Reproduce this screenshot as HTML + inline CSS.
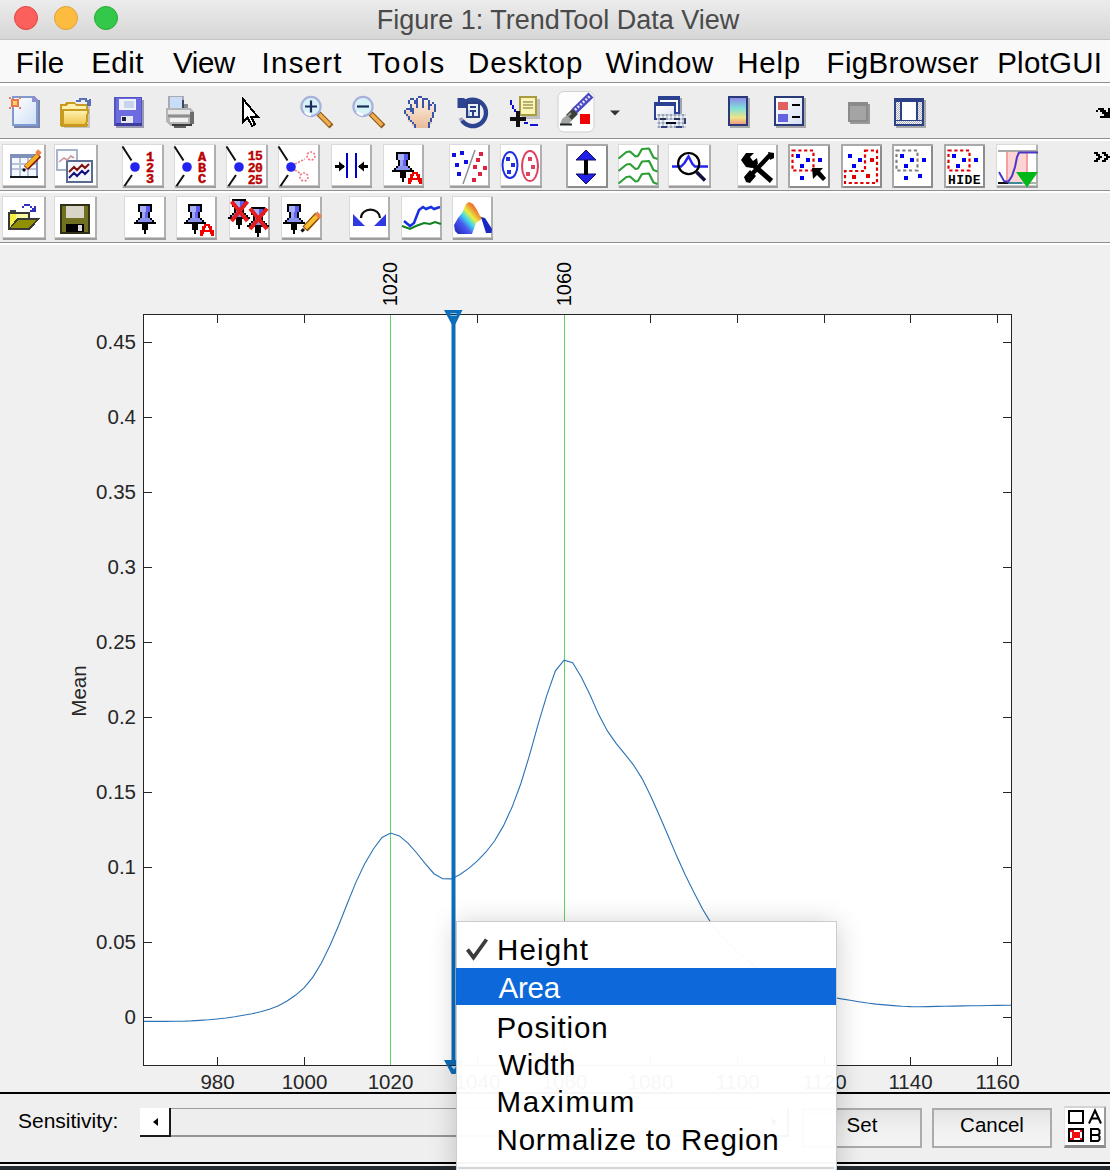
<!DOCTYPE html>
<html><head><meta charset="utf-8">
<style>
*{margin:0;padding:0;box-sizing:border-box}
html,body{width:1110px;height:1170px;overflow:hidden;background:#efefef;font-family:"Liberation Sans",sans-serif}
.a{position:absolute}
#title{left:0;top:0;width:1110px;height:40px;background:linear-gradient(#ececec,#d6d6d6);border-bottom:1px solid #c4c4c4}
.tl{position:absolute;top:6px;width:24px;height:24px;border-radius:50%}
#ttext{left:3px;top:5px;width:1110px;text-align:center;font-size:27px;color:#4a4a4a;white-space:nowrap}
#menu{left:0;top:40px;width:1110px;height:42px;background:#f9f9f9}
.mi{position:absolute;top:46px;font-size:29.5px;color:#000;white-space:nowrap}
.sep{position:absolute;left:0;width:1110px;height:3px;border-top:1px solid #8f8f8f;background:#fff}
.tb{position:absolute;left:0;width:1110px;background:#ededed}
.btn{position:absolute;background:#fff;border-right:2px solid #b8b8b8;border-bottom:3px solid #a9a9a9;border-top:1px solid #e2e2e2;border-left:1px solid #e2e2e2}
.ylab{position:absolute;font-size:19.5px;color:#262626;text-align:right;width:60px;white-space:nowrap}
.xlab{position:absolute;font-size:19.5px;color:#262626;text-align:center;width:60px;white-space:nowrap}
.pm{position:absolute;left:498px;font-size:29.5px;color:#000;white-space:nowrap;letter-spacing:0.6px}
</style></head><body>
<!-- title bar -->
<div id="title" class="a"></div>
<div class="tl" style="left:14px;background:#fc605c;border:1px solid #e0443e"></div>
<div class="tl" style="left:54px;background:#fdbc40;border:1px solid #dea236"></div>
<div class="tl" style="left:94px;background:#34c84a;border:1px solid #27aa35"></div>
<div id="ttext" class="a">Figure 1: TrendTool Data View</div>
<!-- menu -->
<div id="menu" class="a"></div>
<div class="mi" style="left:15.80px;letter-spacing:0.30px">File</div>
<div class="mi" style="left:91.20px;letter-spacing:0.50px">Edit</div>
<div class="mi" style="left:173.00px;letter-spacing:-0.40px">View</div>
<div class="mi" style="left:261.60px;letter-spacing:1.22px">Insert</div>
<div class="mi" style="left:367.20px;letter-spacing:2.02px">Tools</div>
<div class="mi" style="left:468.00px;letter-spacing:1.02px">Desktop</div>
<div class="mi" style="left:605.60px;letter-spacing:0.56px">Window</div>
<div class="mi" style="left:737.20px;letter-spacing:0.77px">Help</div>
<div class="mi" style="left:826.60px;letter-spacing:0.32px">FigBrowser</div>
<div class="mi" style="left:997.20px;letter-spacing:0.25px">PlotGUI</div>
<div class="tb" style="top:85px;height:53px"></div>
<div class="sep" style="top:82px;height:4px"></div>
<!-- TB1 -->
<svg class="a" style="left:0;top:83px" width="1110" height="56" viewBox="0 83 1110 56">
<defs>
 <linearGradient id="gPage" x1="0" y1="0" x2="1" y2="1"><stop offset="0" stop-color="#ffffff"/><stop offset="1" stop-color="#cfe0f6"/></linearGradient>
 <linearGradient id="gFold" x1="0" y1="0" x2="0" y2="1"><stop offset="0" stop-color="#fff4b8"/><stop offset="1" stop-color="#f0c850"/></linearGradient>
 <linearGradient id="gCbar" x1="0" y1="0" x2="0" y2="1"><stop offset="0" stop-color="#8c8ce8"/><stop offset="0.4" stop-color="#80e0d8"/><stop offset="0.75" stop-color="#f0e488"/><stop offset="1" stop-color="#f09c80"/></linearGradient>
 <linearGradient id="gHand" x1="0" y1="0" x2="0" y2="1"><stop offset="0" stop-color="#fdf2e6"/><stop offset="1" stop-color="#e8bc98"/></linearGradient>
 <linearGradient id="gLeg" x1="0" y1="0" x2="1" y2="1"><stop offset="0" stop-color="#ffffff"/><stop offset="1" stop-color="#d8e0f4"/></linearGradient>
</defs>
<g shape-rendering="crispEdges">
 <!-- new -->
 <rect x="14" y="100" width="26" height="28" fill="#7a84a8"/>
 <path d="M12 96h22l4 4v26h-26z" fill="#7f9ad0"/>
 <path d="M14 98h19l3 3v23h-22z" fill="url(#gPage)"/>
 <path d="M33 96h1l4 4v2h-6v-6z" fill="#8f90d0"/>
 <rect x="11" y="99" width="8" height="8" fill="#e87848"/>
 <rect x="13" y="101" width="4" height="4" fill="#f8d070"/>
 <rect x="9" y="97" width="2" height="2" fill="#e88060"/><rect x="19" y="97" width="2" height="2" fill="#e88060"/><rect x="9" y="107" width="2" height="2" fill="#e88060"/><rect x="19" y="107" width="2" height="2" fill="#e88060"/>
 <!-- open -->
 <rect x="64" y="104" width="26" height="24" fill="#a8a8a8" opacity="0.6"/>
 <path d="M60 104h4l2-2h8l2 2h12v22h-28z" fill="#c89a20"/>
 <path d="M62 106h4l2-2h6l2 2h10v4h-24z" fill="#fff0b0"/>
 <path d="M64 110h24v14h-24z" fill="url(#gFold)"/>
 <path d="M62 110h26l-2 16h-24z" fill="none" stroke="#c89a20" stroke-width="2"/>
 <path d="M76 101h4v-2h6v2h2v4h2v-6" fill="none" stroke="#5a70b0" stroke-width="2"/>
 <!-- save -->
 <rect x="116" y="100" width="28" height="28" fill="#9a9ab0"/>
 <rect x="114" y="97" width="28" height="29" fill="#5454c0"/>
 <rect x="116" y="98" width="25" height="27" fill="#6c6ce0"/>
 <rect x="119" y="99" width="17" height="11" fill="#eef2fa"/>
 <rect x="124" y="101" width="10" height="7" fill="#c8d4ec"/>
 <rect x="121" y="116" width="12" height="8" fill="#e8e8f0"/>
 <rect x="122" y="117" width="4" height="4" fill="#202040"/>
 <rect x="116" y="123" width="26" height="3" fill="#3c3ca0"/>
 <!-- print -->
 <rect x="168" y="96" width="16" height="13" fill="#a8aab4"/>
 <rect x="170" y="97" width="12" height="12" fill="#c8ddf8"/>
 <rect x="182" y="100" width="2" height="8" fill="#3e4668"/>
 <rect x="184" y="104" width="4" height="4" fill="#8a8a8a"/>
 <path d="M166 108H190L194 112V122L190 126H170L166 122Z" fill="#b4b4b4"/>
 <rect x="168" y="110" width="22" height="4" fill="#e6e6e6"/>
 <rect x="168" y="115" width="22" height="2" fill="#8e8e8e"/>
 <rect x="170" y="118" width="18" height="4" fill="#f2f2f2"/>
 <rect x="190" y="112" width="4" height="12" fill="#6c6c6c"/>
 <rect x="172" y="124" width="20" height="2" fill="#3a3a3a"/>
 <rect x="174" y="126" width="12" height="2" fill="#606060"/>
 <!-- pointer -->
 <path d="M243 99V122L247.5 117.5L252 126L255 124.5L251 116.5H257.5Z" fill="#fff" stroke="#000" stroke-width="2" stroke-linejoin="miter"/>
</g>
<!-- zoom in / out -->
<g>
 <path d="M320.5 115.5l9 9" stroke="#8a5a18" stroke-width="5.6" stroke-linecap="square"/>
 <path d="M320.5 115.5l8.5 8.5" stroke="#f4ac50" stroke-width="3.4" stroke-linecap="square"/>
 <circle cx="311" cy="106.5" r="9.6" fill="#d6f2f6" stroke="#a8b0dc" stroke-width="2.2"/>
 <path d="M305 112a9 9 0 0 0 6 3" fill="none" stroke="#fff" stroke-width="2.5"/>
 <path d="M305 106.5h12M311 100.5v12" stroke="#1a2a5a" stroke-width="2.2"/>
 <path d="M372.5 115.5l9 9" stroke="#8a5a18" stroke-width="5.6" stroke-linecap="square"/>
 <path d="M372.5 115.5l8.5 8.5" stroke="#f4ac50" stroke-width="3.4" stroke-linecap="square"/>
 <circle cx="363" cy="106.5" r="9.6" fill="#d6f2f6" stroke="#a8b0dc" stroke-width="2.2"/>
 <path d="M357 112a9 9 0 0 0 6 3" fill="none" stroke="#fff" stroke-width="2.5"/>
 <path d="M357 106.5h12" stroke="#1a2a5a" stroke-width="2.2"/>
</g>
<!-- hand -->
<path d="M406 108H412V100H418V98H422V100H428V102H430V106H434V112H434V118H432V124H430V128H416V126H412V122H408V118H406Z" fill="url(#gHand)" shape-rendering="crispEdges"/>
<g fill="#3a55a8" shape-rendering="crispEdges"><rect x="418" y="96" width="4" height="2"/><rect x="410" y="98" width="4" height="2"/><rect x="416" y="98" width="2" height="2"/><rect x="422" y="98" width="6" height="2"/><rect x="408" y="100" width="2" height="2"/><rect x="414" y="100" width="4" height="2"/><rect x="422" y="100" width="2" height="2"/><rect x="428" y="100" width="2" height="2"/><rect x="408" y="102" width="2" height="2"/><rect x="414" y="102" width="4" height="2"/><rect x="422" y="102" width="2" height="2"/><rect x="428" y="102" width="2" height="2"/><rect x="432" y="102" width="2" height="2"/><rect x="410" y="104" width="2" height="2"/><rect x="416" y="104" width="2" height="2"/><rect x="422" y="104" width="2" height="2"/><rect x="428" y="104" width="4" height="2"/><rect x="434" y="104" width="2" height="2"/><rect x="410" y="106" width="2" height="2"/><rect x="416" y="106" width="2" height="2"/><rect x="422" y="106" width="2" height="2"/><rect x="428" y="106" width="2" height="2"/><rect x="434" y="106" width="2" height="2"/><rect x="406" y="108" width="8" height="2"/><rect x="428" y="108" width="2" height="2"/><rect x="434" y="108" width="2" height="2"/><rect x="404" y="110" width="2" height="2"/><rect x="410" y="110" width="4" height="2"/><rect x="434" y="110" width="2" height="2"/><rect x="404" y="112" width="2" height="2"/><rect x="412" y="112" width="2" height="2"/><rect x="432" y="112" width="2" height="2"/><rect x="406" y="114" width="2" height="2"/><rect x="432" y="114" width="2" height="2"/><rect x="408" y="116" width="2" height="2"/><rect x="432" y="116" width="2" height="2"/><rect x="408" y="118" width="2" height="2"/><rect x="430" y="118" width="2" height="2"/><rect x="410" y="120" width="2" height="2"/><rect x="430" y="120" width="2" height="2"/><rect x="412" y="122" width="2" height="2"/><rect x="428" y="122" width="2" height="2"/><rect x="414" y="124" width="2" height="2"/><rect x="428" y="124" width="2" height="2"/><rect x="414" y="126" width="2" height="2"/><rect x="428" y="126" width="2" height="2"/></g>
<!-- rotate -->
<path d="M463.5 103.5A13.2 13.2 0 1 1 462 120.5" fill="none" stroke="#2c4490" stroke-width="4.4"/>
<path d="M462 120.5A13.2 13.2 0 0 1 460.5 118" fill="none" stroke="#9aa0b8" stroke-width="4"/>
<path d="M457.5 98H464L468 101.5L466 108H457.5Z" fill="#2c4490"/>
<g shape-rendering="crispEdges">
 <rect x="466" y="102" width="14" height="16" fill="#2c3f80"/>
 <rect x="468" y="104" width="10" height="12" fill="#e8eef8"/>
 <rect x="470" y="106" width="6" height="2" fill="#2c3f80"/>
 <rect x="470" y="110" width="6" height="2" fill="#2c3f80"/>
 <rect x="472" y="110" width="2" height="8" fill="#2c3f80"/>
 <rect x="470" y="116" width="6" height="2" fill="#2c3f80"/>
 <rect x="468" y="110" width="2" height="6" fill="#b8c8ec"/>
</g>
<!-- data cursor -->
<g shape-rendering="crispEdges">
 <rect x="522" y="99" width="18" height="20" fill="#a0a0a0" opacity="0.6"/>
 <rect x="519" y="96" width="18" height="20" fill="#aa9c40"/>
 <rect x="521" y="98" width="14" height="16" fill="#fbf6b8"/>
 <rect x="523" y="101" width="10" height="1.5" fill="#b8b070"/><rect x="523" y="104" width="10" height="1.5" fill="#b8b070"/><rect x="523" y="107" width="10" height="1.5" fill="#b8b070"/>
 <rect x="510" y="100" width="2" height="5" fill="#1010d0"/><rect x="512" y="105" width="2" height="4" fill="#1010d0"/><rect x="514" y="109" width="2" height="3" fill="#1010d0"/>
 <rect x="524" y="122" width="4" height="2" fill="#1010d0"/><rect x="530" y="124" width="8" height="2" fill="#1010d0"/>
 <rect x="516" y="111" width="4" height="16" fill="#101010"/><rect x="510" y="117" width="16" height="4" fill="#101010"/>
</g>
<!-- brush button -->
<rect x="558" y="91.5" width="36" height="40.5" rx="6" fill="#fdfdfd" stroke="#d0d0d0" stroke-width="1"/>
<path d="M574 111.5L591 95" stroke="#4848c0" stroke-width="7"/>
<path d="M575 110L590.5 95.5" stroke="#e6e6ff" stroke-width="2.6" stroke-dasharray="2 1.6"/>
<path d="M566 115L572 109L578 114L571 121Z" fill="#3a403a"/>
<path d="M568 116L571 113" stroke="#9a9a9a" stroke-width="2"/>
<path d="M560 125L562 119L567 115L572 120L569 124Z" fill="#a4a4a4"/>
<path d="M560 124.5H572" stroke="#202820" stroke-width="2"/>
<rect x="580" y="114" width="10" height="10" fill="#f00000" shape-rendering="crispEdges"/>
<path d="M610 110.5h10l-5 5z" fill="#333"/>
<!-- link -->
<defs><pattern id="chain" width="4" height="4" patternUnits="userSpaceOnUse"><rect width="4" height="4" fill="#c8d0dc"/><rect width="2" height="2" fill="#eef2f8"/><rect x="2" y="2" width="2" height="2" fill="#98a4b8"/></pattern>
<linearGradient id="gWin" x1="0" y1="0" x2="1" y2="1"><stop offset="0" stop-color="#ffffff"/><stop offset="1" stop-color="#dde2f0"/></linearGradient></defs>
<g shape-rendering="crispEdges">
 <rect x="680" y="98" width="2" height="16" fill="#a0a4ac"/>
 <rect x="658" y="96" width="22" height="18" fill="#2a4090"/>
 <rect x="660" y="100" width="18" height="12" fill="#fff"/>
 <rect x="654" y="102" width="22" height="18" fill="#2a4090"/>
 <rect x="656" y="106" width="18" height="12" fill="url(#gWin)"/>
 <rect x="657" y="114" width="29" height="14" fill="url(#chain)"/>
 <rect x="660" y="118" width="6" height="2" fill="#2a3050"/><rect x="674" y="118" width="6" height="2" fill="#2a3050"/>
 <rect x="665" y="120" width="12" height="2" fill="#f4f8ff"/>
 <rect x="666" y="122" width="10" height="2" fill="#000818"/>
 <rect x="661" y="126" width="6" height="2" fill="#34407a"/><rect x="676" y="126" width="6" height="2" fill="#34407a"/>
 <rect x="684" y="118" width="2" height="6" fill="#34407a"/>
</g>
<!-- colorbar -->
<g shape-rendering="crispEdges">
 <rect x="730" y="98" width="20" height="30" fill="#a8a8a8"/>
 <rect x="728" y="96" width="20" height="30" fill="#2a3a78"/>
 <rect x="730" y="98" width="16" height="26" fill="url(#gCbar)"/>
 <!-- legend -->
 <rect x="776" y="98" width="30" height="30" fill="#a8a8a8"/>
 <rect x="774" y="96" width="30" height="30" fill="#2a3a78"/>
 <rect x="776" y="98" width="26" height="26" fill="url(#gLeg)"/>
 <rect x="778" y="102" width="10" height="8" fill="#e06060"/>
 <rect x="778" y="114" width="10" height="8" fill="#6464e0"/>
 <rect x="792" y="104" width="8" height="2" fill="#000"/>
 <rect x="792" y="116" width="8" height="2" fill="#000"/>
 <!-- gray square -->
 <rect x="850" y="104" width="20" height="20" fill="#9a9a9a"/>
 <rect x="848" y="102" width="20" height="20" fill="#8a8a8a"/>
 <rect x="850" y="106" width="16" height="14" fill="#a4a4a4"/>
 <!-- window -->
 <defs><pattern id="chk" width="2" height="2" patternUnits="userSpaceOnUse"><rect width="2" height="2" fill="#f4f4f4"/><rect width="1" height="1" fill="#b0b0b8"/><rect x="1" y="1" width="1" height="1" fill="#b0b0b8"/></pattern></defs>
 <rect x="896" y="100" width="30" height="28" fill="#a8a8a8"/>
 <rect x="894" y="98" width="30" height="28" fill="#2c4088"/>
 <rect x="896" y="102" width="26" height="22" fill="url(#chk)"/>
 <rect x="900" y="102" width="2" height="18" fill="#2c4088"/>
 <rect x="916" y="102" width="2" height="18" fill="#2c4088"/>
 <rect x="902" y="102" width="14" height="18" fill="#ffffff"/>
 <rect x="896" y="120" width="26" height="1" fill="#2c4088"/>
</g>
<!-- overflow arrow -->
<g shape-rendering="crispEdges" fill="#000"><rect x="1098" y="108" width="6" height="2"/><rect x="1108" y="108" width="2" height="2"/><rect x="1096" y="110" width="2" height="2"/><rect x="1100" y="110" width="6" height="2"/><rect x="1108" y="110" width="2" height="2"/><rect x="1102" y="112" width="8" height="2"/><rect x="1104" y="114" width="6" height="2"/><rect x="1100" y="116" width="10" height="2"/></g>
</svg>

<!-- /TB1 -->
<div class="sep" style="top:138px"></div>
<div class="tb" style="top:141px;height:49px"></div>
<div class="sep" style="top:190px"></div>
<div class="tb" style="top:193px;height:49px"></div>
<div class="sep" style="top:242px"></div>
<!-- TB23 -->
<svg class="a" style="left:0;top:140px" width="1110" height="104" viewBox="0 140 1110 104">
<defs><linearGradient id="gRain" x1="0" y1="1" x2="0.6" y2="0"><stop offset="0" stop-color="#3040c0"/><stop offset="0.35" stop-color="#40c0f0"/><stop offset="0.55" stop-color="#60e060"/><stop offset="0.75" stop-color="#f0e040"/><stop offset="1" stop-color="#e03020"/></linearGradient></defs>
<g shape-rendering="crispEdges">
<rect x="2" y="144" width="44" height="44" fill="#dadada"/><rect x="44" y="145" width="2" height="43" fill="#b0b0b0"/><rect x="3" y="186" width="43" height="2" fill="#9e9e9e"/><rect x="3" y="145" width="41" height="41" fill="#fff"/><rect x="3" y="185" width="41" height="1" fill="#c8c8c8"/>
<rect x="54" y="144" width="44" height="44" fill="#dadada"/><rect x="96" y="145" width="2" height="43" fill="#b0b0b0"/><rect x="55" y="186" width="43" height="2" fill="#9e9e9e"/><rect x="55" y="145" width="41" height="41" fill="#fff"/><rect x="55" y="185" width="41" height="1" fill="#c8c8c8"/>
<rect x="122" y="144" width="42" height="44" fill="#dadada"/><rect x="162" y="145" width="2" height="43" fill="#b0b0b0"/><rect x="123" y="186" width="41" height="2" fill="#9e9e9e"/><rect x="123" y="145" width="39" height="41" fill="#fff"/><rect x="123" y="185" width="39" height="1" fill="#c8c8c8"/>
<rect x="174" y="144" width="42" height="44" fill="#dadada"/><rect x="214" y="145" width="2" height="43" fill="#b0b0b0"/><rect x="175" y="186" width="41" height="2" fill="#9e9e9e"/><rect x="175" y="145" width="39" height="41" fill="#fff"/><rect x="175" y="185" width="39" height="1" fill="#c8c8c8"/>
<rect x="226" y="144" width="42" height="44" fill="#dadada"/><rect x="266" y="145" width="2" height="43" fill="#b0b0b0"/><rect x="227" y="186" width="41" height="2" fill="#9e9e9e"/><rect x="227" y="145" width="39" height="41" fill="#fff"/><rect x="227" y="185" width="39" height="1" fill="#c8c8c8"/>
<rect x="278" y="144" width="42" height="44" fill="#dadada"/><rect x="318" y="145" width="2" height="43" fill="#b0b0b0"/><rect x="279" y="186" width="41" height="2" fill="#9e9e9e"/><rect x="279" y="145" width="39" height="41" fill="#fff"/><rect x="279" y="185" width="39" height="1" fill="#c8c8c8"/>
<rect x="331" y="144" width="41" height="44" fill="#dadada"/><rect x="370" y="145" width="2" height="43" fill="#b0b0b0"/><rect x="332" y="186" width="40" height="2" fill="#9e9e9e"/><rect x="332" y="145" width="38" height="41" fill="#fff"/><rect x="332" y="185" width="38" height="1" fill="#c8c8c8"/>
<rect x="383" y="144" width="41" height="44" fill="#dadada"/><rect x="422" y="145" width="2" height="43" fill="#b0b0b0"/><rect x="384" y="186" width="40" height="2" fill="#9e9e9e"/><rect x="384" y="145" width="38" height="41" fill="#fff"/><rect x="384" y="185" width="38" height="1" fill="#c8c8c8"/>
<rect x="449" y="144" width="41" height="44" fill="#dadada"/><rect x="488" y="145" width="2" height="43" fill="#b0b0b0"/><rect x="450" y="186" width="40" height="2" fill="#9e9e9e"/><rect x="450" y="145" width="38" height="41" fill="#fff"/><rect x="450" y="185" width="38" height="1" fill="#c8c8c8"/>
<rect x="500" y="144" width="42" height="44" fill="#dadada"/><rect x="540" y="145" width="2" height="43" fill="#b0b0b0"/><rect x="501" y="186" width="41" height="2" fill="#9e9e9e"/><rect x="501" y="145" width="39" height="41" fill="#fff"/><rect x="501" y="185" width="39" height="1" fill="#c8c8c8"/>
<rect x="566" y="144" width="42" height="44" fill="#a9a9a9"/><rect x="568" y="146" width="40" height="42" fill="#8c8c8c"/><rect x="568" y="146" width="38" height="40" fill="#fff"/>
<rect x="618" y="144" width="41" height="44" fill="#dadada"/><rect x="657" y="145" width="2" height="43" fill="#b0b0b0"/><rect x="619" y="186" width="40" height="2" fill="#9e9e9e"/><rect x="619" y="145" width="38" height="41" fill="#fff"/><rect x="619" y="185" width="38" height="1" fill="#c8c8c8"/>
<rect x="668" y="144" width="43" height="44" fill="#dadada"/><rect x="709" y="145" width="2" height="43" fill="#b0b0b0"/><rect x="669" y="186" width="42" height="2" fill="#9e9e9e"/><rect x="669" y="145" width="40" height="41" fill="#fff"/><rect x="669" y="185" width="40" height="1" fill="#c8c8c8"/>
<rect x="737" y="144" width="41" height="44" fill="#dadada"/><rect x="776" y="145" width="2" height="43" fill="#b0b0b0"/><rect x="738" y="186" width="40" height="2" fill="#9e9e9e"/><rect x="738" y="145" width="38" height="41" fill="#fff"/><rect x="738" y="185" width="38" height="1" fill="#c8c8c8"/>
<rect x="788" y="144" width="42" height="44" fill="#a9a9a9"/><rect x="790" y="146" width="40" height="42" fill="#8c8c8c"/><rect x="790" y="146" width="38" height="40" fill="#fff"/>
<rect x="841" y="144" width="41" height="44" fill="#a9a9a9"/><rect x="843" y="146" width="39" height="42" fill="#8c8c8c"/><rect x="843" y="146" width="37" height="40" fill="#fff"/>
<rect x="892" y="144" width="41" height="44" fill="#a9a9a9"/><rect x="894" y="146" width="39" height="42" fill="#8c8c8c"/><rect x="894" y="146" width="37" height="40" fill="#fff"/>
<rect x="944" y="144" width="41" height="44" fill="#a9a9a9"/><rect x="946" y="146" width="39" height="42" fill="#8c8c8c"/><rect x="946" y="146" width="37" height="40" fill="#fff"/>
<rect x="996" y="144" width="42" height="44" fill="#dadada"/><rect x="1036" y="145" width="2" height="43" fill="#b0b0b0"/><rect x="997" y="186" width="41" height="2" fill="#9e9e9e"/><rect x="997" y="145" width="39" height="41" fill="#fff"/><rect x="997" y="185" width="39" height="1" fill="#c8c8c8"/>
<rect x="2" y="196" width="44" height="44" fill="#dadada"/><rect x="44" y="197" width="2" height="43" fill="#b0b0b0"/><rect x="3" y="238" width="43" height="2" fill="#9e9e9e"/><rect x="3" y="197" width="41" height="41" fill="#fff"/><rect x="3" y="237" width="41" height="1" fill="#c8c8c8"/>
<rect x="54" y="196" width="43" height="44" fill="#dadada"/><rect x="95" y="197" width="2" height="43" fill="#b0b0b0"/><rect x="55" y="238" width="42" height="2" fill="#9e9e9e"/><rect x="55" y="197" width="40" height="41" fill="#fff"/><rect x="55" y="237" width="40" height="1" fill="#c8c8c8"/>
<rect x="124" y="196" width="42" height="44" fill="#dadada"/><rect x="164" y="197" width="2" height="43" fill="#b0b0b0"/><rect x="125" y="238" width="41" height="2" fill="#9e9e9e"/><rect x="125" y="197" width="39" height="41" fill="#fff"/><rect x="125" y="237" width="39" height="1" fill="#c8c8c8"/>
<rect x="176" y="196" width="41" height="44" fill="#dadada"/><rect x="215" y="197" width="2" height="43" fill="#b0b0b0"/><rect x="177" y="238" width="40" height="2" fill="#9e9e9e"/><rect x="177" y="197" width="38" height="41" fill="#fff"/><rect x="177" y="237" width="38" height="1" fill="#c8c8c8"/>
<rect x="229" y="196" width="41" height="44" fill="#dadada"/><rect x="268" y="197" width="2" height="43" fill="#b0b0b0"/><rect x="230" y="238" width="40" height="2" fill="#9e9e9e"/><rect x="230" y="197" width="38" height="41" fill="#fff"/><rect x="230" y="237" width="38" height="1" fill="#c8c8c8"/>
<rect x="281" y="196" width="41" height="44" fill="#dadada"/><rect x="320" y="197" width="2" height="43" fill="#b0b0b0"/><rect x="282" y="238" width="40" height="2" fill="#9e9e9e"/><rect x="282" y="197" width="38" height="41" fill="#fff"/><rect x="282" y="237" width="38" height="1" fill="#c8c8c8"/>
<rect x="349" y="196" width="41" height="44" fill="#dadada"/><rect x="388" y="197" width="2" height="43" fill="#b0b0b0"/><rect x="350" y="238" width="40" height="2" fill="#9e9e9e"/><rect x="350" y="197" width="38" height="41" fill="#fff"/><rect x="350" y="237" width="38" height="1" fill="#c8c8c8"/>
<rect x="401" y="196" width="41" height="44" fill="#dadada"/><rect x="440" y="197" width="2" height="43" fill="#b0b0b0"/><rect x="402" y="238" width="40" height="2" fill="#9e9e9e"/><rect x="402" y="197" width="38" height="41" fill="#fff"/><rect x="402" y="237" width="38" height="1" fill="#c8c8c8"/>
<rect x="452" y="196" width="41" height="44" fill="#dadada"/><rect x="491" y="197" width="2" height="43" fill="#b0b0b0"/><rect x="453" y="238" width="40" height="2" fill="#9e9e9e"/><rect x="453" y="197" width="38" height="41" fill="#fff"/><rect x="453" y="237" width="38" height="1" fill="#c8c8c8"/>
</g>
<defs>
 <g id="pin">
  <rect x="4" y="0" width="14" height="2" fill="#000"/>
  <rect x="6" y="2" width="10" height="6" fill="#a8b0f8"/>
  <rect x="12" y="2" width="4" height="6" fill="#5a5af0"/>
  <rect x="4" y="2" width="2" height="6" fill="#000"/><rect x="16" y="2" width="2" height="6" fill="#000"/>
  <rect x="6" y="8" width="2" height="6" fill="#000"/><rect x="14" y="8" width="2" height="6" fill="#000"/>
  <rect x="8" y="8" width="6" height="6" fill="#9ca4f4"/>
  <rect x="11" y="8" width="3" height="6" fill="#6464ec"/>
  <rect x="4" y="14" width="2" height="2" fill="#000"/><rect x="16" y="14" width="2" height="2" fill="#000"/>
  <rect x="6" y="14" width="10" height="4" fill="#8890f0"/>
  <rect x="2" y="16" width="2" height="2" fill="#000"/><rect x="18" y="16" width="2" height="2" fill="#000"/>
  <rect x="4" y="16" width="14" height="2" fill="#8890f0"/>
  <rect x="0" y="18" width="22" height="2" fill="#000"/>
  <rect x="8" y="20" width="6" height="6" fill="#000"/>
  <rect x="10" y="26" width="2" height="4" fill="#000"/>
 </g>
 <g id="glA" fill="#f00000">
  <rect x="4" y="0" width="6" height="2"/>
  <rect x="2" y="2" width="4" height="2"/><rect x="8" y="2" width="4" height="2"/>
  <rect x="2" y="4" width="3" height="2"/><rect x="9" y="4" width="3" height="2"/>
  <rect x="0" y="6" width="14" height="2"/>
  <rect x="0" y="8" width="4" height="2"/><rect x="10" y="8" width="4" height="2"/>
  <rect x="0" y="10" width="3" height="2"/><rect x="11" y="10" width="3" height="2"/>
 </g>
</defs>
<g shape-rendering="crispEdges">
 <!-- r2b1 table edit -->
 <rect x="10" y="154" width="28" height="24" fill="#8090b8"/>
 <rect x="12" y="158" width="24" height="18" fill="#f4f8ff"/>
 <rect x="12" y="163" width="24" height="1.5" fill="#b8c4d8"/><rect x="12" y="168" width="24" height="1.5" fill="#b8c4d8"/>
 <rect x="19" y="158" width="1.5" height="18" fill="#b8c4d8"/><rect x="27" y="158" width="1.5" height="18" fill="#b8c4d8"/>
 <rect x="10" y="176" width="28" height="2" fill="#101820"/>
</g>
<path d="M26 168l13-13" stroke="#801000" stroke-width="6"/>
<path d="M26 167l12-12" stroke="#f8b020" stroke-width="4"/>
<path d="M37 154l3-3" stroke="#f08040" stroke-width="5"/>
<path d="M25 169l-2 2" stroke="#101010" stroke-width="3"/>
<g shape-rendering="crispEdges">
 <!-- r2b2 plot graphs -->
 <rect x="56" y="149" width="22" height="22" fill="#a8b4cc"/>
 <rect x="58" y="151" width="18" height="18" fill="#fafcff"/>
 <rect x="66" y="160" width="27" height="23" fill="#5a6a90"/>
 <rect x="68" y="162" width="23" height="19" fill="#f4f6fa"/>
</g>
<path d="M59 162l5-4 3 2 4-4 3 2" fill="none" stroke="#c89898" stroke-width="1.6"/>
<path d="M69 172l5-5 3 3 5-5 3 3 4-4" fill="none" stroke="#801010" stroke-width="2"/>
<path d="M69 178l5-5 3 3 5-5 3 3 4-4" fill="none" stroke="#101080" stroke-width="2"/>
<!-- r2b3..6 label buttons -->
<g stroke="#101010" stroke-width="2" fill="none"><path d="M122.5 146.5L131.5 160.5M124.5 186L132.0 175" /><path d="M174.5 146.5L183.5 160.5M176.5 186L184.0 175" /><path d="M226.5 146.5L235.5 160.5M228.5 186L236.0 175" /><path d="M278.5 146.5L287.5 160.5M280.5 186L288.0 175" /></g>
<g fill="#2424f0"><circle cx="135" cy="167" r="4.8"/><circle cx="187" cy="167" r="4.8"/><circle cx="239" cy="167" r="4.8"/><circle cx="291" cy="167" r="4.8"/></g>
<g font-family="Liberation Mono" font-weight="bold" fill="#b80000" stroke="#b80000" stroke-width="0.5" font-size="13.5" text-anchor="middle">
 <text x="150" y="161">1</text><text x="150" y="172">2</text><text x="150" y="183">3</text>
 <text x="202" y="161">A</text><text x="202" y="172">B</text><text x="202" y="183">C</text>
</g>
<g font-family="Liberation Mono" font-weight="bold" fill="#b80000" stroke="#b80000" stroke-width="0.4" font-size="13" text-anchor="middle" letter-spacing="-0.5">
 <text x="255" y="160">15</text><text x="255" y="172">20</text><text x="255" y="184">25</text>
</g>
<g fill="none" stroke="#f07080" stroke-width="1.6" stroke-dasharray="2 1.5">
 <circle cx="311" cy="156" r="4"/><circle cx="304" cy="177" r="4"/>
 <path d="M295 164l10-5M295 170l6 4"/>
</g>
<!-- r2b7 |<>| -->
<g shape-rendering="crispEdges">
 <rect x="346" y="153" width="2" height="25" fill="#0000d0"/><rect x="355" y="153" width="2" height="25" fill="#0000d0"/>
 <rect x="335" y="165" width="9" height="3" fill="#000"/><rect x="359" y="165" width="9" height="3" fill="#000"/>
</g>
<path d="M345 166.5l-6-5v10z M358 166.5l6-5v10z" fill="#000"/>
<!-- r2b9 scatter -->
<g shape-rendering="crispEdges" fill="#1010e0">
 <rect x="452" y="153" width="4" height="4"/><rect x="460" y="151" width="4" height="4"/><rect x="455" y="163" width="4" height="4"/><rect x="464" y="160" width="4" height="4"/><rect x="457" y="172" width="4" height="4"/>
</g>
<g shape-rendering="crispEdges" fill="#e02040">
 <rect x="479" y="152" width="4" height="4"/><rect x="476" y="158" width="4" height="4"/><rect x="473" y="165" width="4" height="4"/><rect x="483" y="166" width="4" height="4"/><rect x="478" y="172" width="4" height="4"/><rect x="472" y="178" width="4" height="4"/>
</g>
<path d="M475 150l-12 34" stroke="#909090" stroke-width="1.5"/>
<!-- r2b10 ellipses -->
<ellipse cx="510" cy="165" rx="7.5" ry="13" fill="none" stroke="#2030e0" stroke-width="2"/>
<ellipse cx="530" cy="166" rx="8" ry="15" fill="none" stroke="#e04060" stroke-width="2"/>
<g shape-rendering="crispEdges">
 <rect x="506" y="157" width="3.5" height="3.5" fill="#2030e0"/><rect x="511" y="163" width="3.5" height="3.5" fill="#2030e0"/><rect x="507" y="170" width="3.5" height="3.5" fill="#2030e0"/>
 <rect x="528" y="157" width="3.5" height="3.5" fill="#e04060"/><rect x="531" y="165" width="3.5" height="3.5" fill="#e04060"/><rect x="526" y="172" width="3.5" height="3.5" fill="#e04060"/>
</g>
<!-- r2b11 up-down -->
<path d="M586 150l10 10h-20z M586 184l10-10h-20z" fill="#2020e8" stroke="#101060" stroke-width="1"/>
<rect x="584" y="159.5" width="4" height="15" fill="#000" shape-rendering="crispEdges"/>
<!-- r2b12 waves -->
<g fill="none" stroke="#2e9e38" stroke-width="2.2" stroke-linejoin="round">
 <path id="wv" d="M618.5 158.5L626.5 152L630 151.5L635.5 156.5L638 156L642 149L649 148.5L653.5 157.5L657.5 159"/>
 <use href="#wv" y="12.5"/>
 <use href="#wv" y="25"/>
</g>
<!-- r2b13 peak magnifier -->
<path d="M672 166.5H681L684.5 163L688.5 156.5L692.5 164L695 166.5H708" fill="none" stroke="#2424f0" stroke-width="2.4"/>
<circle cx="688.7" cy="163.6" r="10.6" fill="none" stroke="#000" stroke-width="2.2"/>
<path d="M696.5 172L705 180.5" stroke="#101040" stroke-width="3.6"/>
<!-- r2b14 tools -->
<path d="M751 163L771.5 181" stroke="#000" stroke-width="5"/>
<path d="M741 160L746 153H754L750 157L753 161L757 158L758 164L752 168L746 167Z" fill="#000"/>
<path d="M770 155L752 174" stroke="#000" stroke-width="4.4"/>
<path d="M768 152L774 153L774 158L770 160Z" fill="#000"/>
<path d="M744 177L750 170L756 176L750 183L746 182Z" fill="#000"/>
<!-- r2b15-18 dotted -->
<g fill="none" stroke-width="2.2" stroke-dasharray="3.2 2.6">
 <rect x="792.5" y="150.5" width="21" height="20" stroke="#e00000"/>
 <path d="M865 150.5H877V183H845V171H865Z" stroke="#e00000"/>
 <rect x="896.5" y="150.5" width="21" height="20" stroke="#808080"/>
 <rect x="948.5" y="150.5" width="21" height="20" stroke="#e00000"/>
</g>
<g shape-rendering="crispEdges" fill="#0000f0">
 <rect x="796" y="154" width="4" height="4"/><rect x="806" y="158" width="4" height="4"/><rect x="818" y="158" width="4" height="4"/><rect x="800" y="164" width="4" height="4"/><rect x="800" y="176" width="4" height="4"/>
 <rect x="848" y="154" width="4" height="4"/><rect x="858" y="158" width="4" height="4"/><rect x="852" y="164" width="4" height="4"/>
 <rect x="900" y="154" width="4" height="4"/><rect x="910" y="158" width="4" height="4"/><rect x="922" y="158" width="4" height="4"/><rect x="904" y="164" width="4" height="4"/><rect x="904" y="176" width="4" height="4"/><rect x="918" y="174" width="4" height="4"/>
 <rect x="952" y="154" width="4" height="4"/><rect x="962" y="158" width="4" height="4"/><rect x="974" y="158" width="4" height="4"/><rect x="956" y="164" width="4" height="4"/>
</g>
<g shape-rendering="crispEdges" fill="#e00000">
 <rect x="870" y="158" width="4" height="4"/><rect x="852" y="175" width="4" height="4"/><rect x="866" y="174" width="4" height="4"/>
</g>
<path d="M812 168H823L820 171L826 178L823 181L817 175L813 179Z" fill="#000"/>
<text x="964.5" y="184" font-family="Liberation Mono" font-weight="bold" font-size="13" fill="#000" text-anchor="middle" letter-spacing="0.5">HIDE</text>
<!-- r2b19 pink chart -->
<g shape-rendering="crispEdges">
 <rect x="998" y="150" width="40" height="2" fill="#a8a8a8"/>
 <rect x="1006" y="152" width="22" height="30" fill="#fcd4d4"/>
 <rect x="1006" y="152" width="2" height="30" fill="#f4a0a0"/>
 <rect x="1026" y="152" width="2" height="20" fill="#f4a0a0"/>
 <rect x="998" y="182" width="10" height="2" fill="#101010"/>
 <rect x="1008" y="182" width="14" height="2" fill="#408898"/>
 <rect x="1022" y="182" width="16" height="2" fill="#b0b0b0"/>
</g>
<path d="M999 172L1004 181L1008 182L1012 176L1015 167L1017 157L1019 152.5H1038" fill="none" stroke="#4838c8" stroke-width="2"/>
<path d="M1016 172H1038L1027 187.5Z" fill="#00b818"/>
<!-- row3 -->
<g shape-rendering="crispEdges">
 <!-- open -->
 <rect x="10" y="210" width="6" height="2" fill="#404040"/>
 <rect x="8" y="212" width="22" height="18" fill="#383838"/>
 <rect x="10" y="214" width="18" height="14" fill="#f4f040"/>
 <rect x="16" y="214" width="12" height="4" fill="#f8f8a0"/>
 <path d="M17 218H40L30 230H8Z" fill="#383838"/>
 <path d="M18 220H36L29 228H11Z" fill="#909000"/>
 <rect x="24" y="204" width="6" height="2" fill="#3030c0"/><rect x="22" y="206" width="2" height="2" fill="#3030c0"/><rect x="30" y="206" width="2" height="2" fill="#3030c0"/><rect x="34" y="206" width="2" height="6" fill="#3030c0"/><rect x="30" y="210" width="6" height="2" fill="#3030c0"/><rect x="32" y="208" width="2" height="2" fill="#3030c0"/>
 <!-- save dark -->
 <rect x="60" y="204" width="30" height="30" fill="#303018"/>
 <rect x="62" y="206" width="26" height="26" fill="#707020"/>
 <rect x="66" y="206" width="18" height="12" fill="#d8d4c8"/>
 <rect x="66" y="224" width="18" height="8" fill="#000"/>
 <rect x="78" y="225" width="4" height="6" fill="#d8d8d8"/>
</g>
<!-- pins -->
<g shape-rendering="crispEdges">
 <use href="#pin" x="134" y="204"/>
 <use href="#pin" x="184" y="204"/>
 <use href="#pin" x="228" y="199"/>
 <use href="#pin" x="247" y="207"/>
 <use href="#pin" x="283" y="204"/>
 <use href="#pin" x="392" y="152"/>
 <use href="#glA" x="408" y="172"/>
 <use href="#glA" x="200" y="224"/>
</g>
<path d="M231.5 201.5L247.5 221M247.5 201.5L231.5 221M250 208.5L267 229M267 208.5L250 229" stroke="#e41c1c" stroke-width="4"/>
<path d="M305 229L318 215" stroke="#8a4a00" stroke-width="7"/>
<path d="M305.5 228L317.5 215.5" stroke="#f8c030" stroke-width="4.4"/>
<path d="M316 213L320.5 217.5" stroke="#e88050" stroke-width="4"/>
<path d="M301.5 231.5L304 229" stroke="#101010" stroke-width="3"/>
<!-- undo arc -->
<path d="M361 218a9 8 0 0 1 19 0" fill="none" stroke="#101010" stroke-width="2.2"/>
<path d="M353 214v12h12z M386 214v12h-12z" fill="#3038e0"/>
<!-- curves -->
<path d="M404 221l6 5 4-3 5-13 4-3 3 2 5-2 3 2 6-2" fill="none" stroke="#1830e0" stroke-width="2.6"/>
<path d="M402 226l8 3 6-3 8-3 6 1 5-2 6 2" fill="none" stroke="#108020" stroke-width="2"/>
<!-- rainbow -->
<defs><linearGradient id="gJet" x1="0" y1="1" x2="1" y2="0"><stop offset="0" stop-color="#1a20b0"/><stop offset="0.3" stop-color="#4a58f0"/><stop offset="0.45" stop-color="#40d8f0"/><stop offset="0.58" stop-color="#e8f040"/><stop offset="0.75" stop-color="#f07a30"/><stop offset="1" stop-color="#d02020"/></linearGradient></defs>
<path d="M454 225L458 218L462 213L466 204L469 202L473 204L477 210L480 216L483 218L476 223L472 234H458L455 231Z" fill="url(#gJet)"/>
<path d="M481 217L485 218L492 229L491.5 233H486Z" fill="#1828c0"/>
<!-- r2 overflow -->
<g shape-rendering="crispEdges" fill="#000">
 <rect x="1094" y="152" width="4" height="2"/><rect x="1096" y="154" width="4" height="2"/><rect x="1098" y="156" width="4" height="2"/><rect x="1096" y="158" width="4" height="2"/><rect x="1094" y="160" width="4" height="2"/>
 <rect x="1102" y="152" width="4" height="2"/><rect x="1104" y="154" width="4" height="2"/><rect x="1106" y="156" width="4" height="2"/><rect x="1104" y="158" width="4" height="2"/><rect x="1102" y="160" width="4" height="2"/>
</g>

</svg>
<!-- /TB23 -->
<!-- figure -->
<div class="a" style="left:0;top:245px;width:1110px;height:847px;background:#f0f0f0"></div>
<svg class="a" style="left:0;top:0" width="1110" height="1170" viewBox="0 0 1110 1170">
 <rect x="143.5" y="314.5" width="868" height="751" fill="#fff"/>
 <path d="M144 342.5h8M1011 342.5h-8M144 417.5h8M1011 417.5h-8M144 492.5h8M1011 492.5h-8M144 567.5h8M1011 567.5h-8M144 642.5h8M1011 642.5h-8M144 717.5h8M1011 717.5h-8M144 792.5h8M1011 792.5h-8M144 867.5h8M1011 867.5h-8M144 942.5h8M1011 942.5h-8M144 1017.5h8M1011 1017.5h-8M217.5 1065v-8M217.5 315v8M304.5 1065v-8M304.5 315v8M390.5 1065v-8M390.5 315v8M477.5 1065v-8M477.5 315v8M564.5 1065v-8M564.5 315v8M650.5 1065v-8M650.5 315v8M737.5 1065v-8M737.5 315v8M824.5 1065v-8M824.5 315v8M910.5 1065v-8M910.5 315v8M997.5 1065v-8M997.5 315v8" stroke="#262626" stroke-width="1" fill="none"/>
 <g stroke="#63d263" stroke-width="1"><path d="M390.5 315V1065M564.5 315V1065"/></g>
 <path d="M143.5 1021.4 L148.0 1021.4 L156.7 1021.4 L165.3 1021.4 L174.0 1021.3 L182.7 1021.2 L191.3 1020.9 L200.0 1020.4 L208.7 1019.8 L217.3 1019.0 L226.0 1018.0 L234.7 1016.8 L243.3 1015.3 L252.0 1013.7 L260.7 1011.8 L269.3 1009.3 L278.0 1005.9 L286.7 1001.2 L295.4 995.3 L304.0 987.8 L312.7 977.4 L321.4 963.1 L330.0 945.5 L338.7 925.2 L347.4 903.3 L356.0 882.1 L364.7 863.7 L373.4 849.0 L382.0 837.5 L390.7 833.0 L399.4 835.9 L408.0 843.2 L416.7 853.0 L425.4 863.9 L434.0 873.7 L442.7 878.7 L451.4 878.9 L460.0 874.5 L468.7 868.4 L477.4 860.9 L486.0 852.0 L494.7 840.8 L503.4 825.9 L512.1 807.1 L520.7 784.0 L529.4 755.6 L538.1 724.4 L546.7 695.6 L555.4 670.8 L564.1 660.1 L572.7 662.7 L581.4 677.3 L590.1 695.1 L598.7 714.6 L607.4 730.9 L616.1 743.3 L624.7 753.9 L633.4 764.8 L642.1 778.6 L650.7 796.0 L659.4 815.5 L668.1 835.8 L676.7 856.1 L685.4 875.3 L694.1 892.8 L702.7 909.3 L711.4 923.6 L720.1 934.3 L728.8 943.2 L737.4 951.6 L746.1 959.4 L754.8 966.5 L763.4 972.6 L772.1 977.8 L780.8 982.2 L789.4 985.8 L798.1 988.6 L806.8 990.9 L815.4 993.1 L824.1 995.3 L832.8 997.3 L841.4 998.9 L850.1 1000.3 L858.8 1001.7 L867.4 1003.0 L876.1 1004.1 L884.8 1004.9 L893.4 1005.6 L902.1 1006.2 L910.8 1006.6 L919.4 1006.7 L928.1 1006.6 L936.8 1006.4 L945.5 1006.3 L954.1 1006.1 L962.8 1005.9 L971.5 1005.8 L980.1 1005.7 L988.8 1005.5 L997.5 1005.4 L1006.1 1005.3 L1011.5 1005.2" fill="none" stroke="#2a72b4" stroke-width="1.1"/>
 <rect x="143.5" y="314.5" width="868" height="751" fill="none" stroke="#262626" stroke-width="1"/>
 <g font-family="Liberation Sans" font-size="20.5" fill="#262626">
  <text x="136" y="348.5" text-anchor="end">0.45</text>
  <text x="136" y="423.5" text-anchor="end">0.4</text>
  <text x="136" y="498.5" text-anchor="end">0.35</text>
  <text x="136" y="573.5" text-anchor="end">0.3</text>
  <text x="136" y="648.5" text-anchor="end">0.25</text>
  <text x="136" y="723.5" text-anchor="end">0.2</text>
  <text x="136" y="798.5" text-anchor="end">0.15</text>
  <text x="136" y="873.5" text-anchor="end">0.1</text>
  <text x="136" y="948.5" text-anchor="end">0.05</text>
  <text x="136" y="1023.5" text-anchor="end">0</text>
  <text x="217.5" y="1089" text-anchor="middle">980</text>
  <text x="304.5" y="1089" text-anchor="middle">1000</text>
  <text x="390.5" y="1089" text-anchor="middle">1020</text>
  <text x="477.5" y="1089" text-anchor="middle">1040</text>
  <text x="564.5" y="1089" text-anchor="middle">1060</text>
  <text x="650.5" y="1089" text-anchor="middle">1080</text>
  <text x="737.5" y="1089" text-anchor="middle">1100</text>
  <text x="824.5" y="1089" text-anchor="middle">1120</text>
  <text x="910.5" y="1089" text-anchor="middle">1140</text>
  <text x="997.5" y="1089" text-anchor="middle">1160</text>
  <text transform="translate(86 691) rotate(-90)" text-anchor="middle">Mean</text>
 </g>
 <g font-family="Liberation Sans" font-size="20" fill="#000">
  <text transform="translate(397 284) rotate(-90)" text-anchor="middle">1020</text>
  <text transform="translate(571 284) rotate(-90)" text-anchor="middle">1060</text>
 </g>
 <rect x="451.5" y="316" width="4" height="746" fill="#0d6db8"/>
 <path d="M444 310H462.5L455.5 324H451.5Z" fill="#0d6db8"/><rect x="450.5" y="313" width="6" height="3" fill="#7cc4f4"/><rect x="450.5" y="314" width="6" height="1" fill="#1a2a3a"/>
 <path d="M444 1060H463L455.5 1074H451.5Z" fill="#0d6db8"/><path d="M451 1066H456.5L454 1069.5Z" fill="#a8dcf8"/><rect x="449" y="1065" width="8" height="1" fill="#1a2a3a"/>
</svg>
<!-- bottom panel -->
<div class="a" style="left:0;top:1092px;width:1110px;height:2px;background:#000"></div>
<div class="a" style="left:0;top:1094px;width:1110px;height:69px;background:#efefef"></div>
<div class="a" style="left:18px;top:1109px;font-size:21px;color:#000;white-space:nowrap">Sensitivity:</div>
<div class="a" style="left:171px;top:1108px;width:588px;height:29px;border-top:1px solid #9c9c9c;border-bottom:2px solid #959595;background:#eeeeee"></div>
<div class="a" style="left:759px;top:1108px;width:30px;height:29px;background:#fff;border-right:2px solid #1a1a1a;border-bottom:2px solid #1a1a1a"></div>
<svg class="a" style="left:768px;top:1116px" width="12" height="12"><path d="M9 6L4 2V10Z" fill="#000"/></svg>
<div class="a" style="left:140px;top:1108px;width:31px;height:29px;background:#fff;border-right:2px solid #1a1a1a;border-bottom:2px solid #1a1a1a"></div>
<svg class="a" style="left:150px;top:1116px" width="12" height="12"><path d="M3 6L8 2V10Z" fill="#000"/></svg>
<div class="a" style="left:802px;top:1108px;width:120px;height:40px;border:2px solid #ababab;background:linear-gradient(#e3e3e3,#efefef 45%,#f5f5f5)"></div>
<div class="a" style="left:802px;top:1113px;width:120px;text-align:center;font-size:20.5px;color:#000">Set</div>
<div class="a" style="left:932px;top:1108px;width:120px;height:40px;border:2px solid #ababab;background:linear-gradient(#e3e3e3,#efefef 45%,#f5f5f5)"></div>
<div class="a" style="left:932px;top:1113px;width:120px;text-align:center;font-size:20.5px;color:#000">Cancel</div>
<div class="a" style="left:1064px;top:1106px;width:42px;height:42px;background:#fff;border-right:2px solid #9a9a9a;border-bottom:3px solid #8a8a8a;border-top:2px solid #d4d4d4;border-left:1px solid #e4e4e4"></div>
<svg class="a" style="left:1060px;top:1102px" width="50" height="50" viewBox="1060 1102 50 50">
 <g shape-rendering="crispEdges">
 <rect x="1069" y="1111" width="14" height="12" fill="#fff" stroke="#000" stroke-width="2"/>
 <rect x="1069" y="1129" width="14" height="12" fill="#ee1010" stroke="#000" stroke-width="2"/>
 <rect x="1074" y="1130" width="6" height="2" fill="#fff"/><rect x="1074" y="1138" width="6" height="2" fill="#fff"/>
 <rect x="1070" y="1132" width="2" height="6" fill="#fff"/><rect x="1080" y="1132" width="2" height="6" fill="#fff"/>
 </g>
 <path d="M1089 1123.5L1095 1110.5L1101 1123.5M1091.5 1118.5H1098.5" fill="none" stroke="#000" stroke-width="2"/>
 <path d="M1091 1129H1098L1099.5 1130.5V1133.5L1098 1135H1091M1091 1135H1098L1099.5 1136.5V1139.5L1098 1141H1091V1128" fill="none" stroke="#000" stroke-width="2"/>
</svg>
<div class="a" style="left:0;top:1166px;width:1110px;height:4px;background:#222b31"></div>
<div class="a" style="left:0;top:1162px;width:1110px;height:2px;background:#000"></div>
<div class="a" style="left:0;top:1164px;width:1110px;height:2px;background:#f4f4f4;border-radius:6px 0 0 0"></div>
<!-- popup menu -->
<div class="a" style="left:456px;top:921px;width:381px;height:260px;background:rgba(255,255,255,0.965);border:1px solid rgba(0,0,0,0.2);box-shadow:0 3px 26px rgba(0,0,0,0.2)"></div>
<div class="a" style="left:456px;top:968px;width:380px;height:37px;background:rgba(0,97,216,0.95)"></div>
<svg class="a" style="left:460px;top:932px" width="35" height="34"><path d="M7.5 17.5L13.5 25.5L26.5 7.5" fill="none" stroke="#3c3c3c" stroke-width="3.8" stroke-linejoin="miter"/></svg>
<div class="pm" style="left:497.00px;top:932.50px;letter-spacing:1.14px">Height</div>
<div class="pm" style="left:498.50px;top:971.00px;color:#fff;letter-spacing:-0.2px">Area</div>
<div class="pm" style="left:496.50px;top:1011.00px;letter-spacing:0.90px">Position</div>
<div class="pm" style="left:498.50px;top:1047.50px;letter-spacing:0.35px">Width</div>
<div class="pm" style="left:496.50px;top:1084.50px;letter-spacing:1.67px">Maximum</div>
<div class="pm" style="left:496.50px;top:1123.00px;letter-spacing:0.83px">Normalize to Region</div>
<div class="a" style="left:458px;top:1167px;width:376px;height:2px;background:#d6d6d6"></div>
</body></html>
